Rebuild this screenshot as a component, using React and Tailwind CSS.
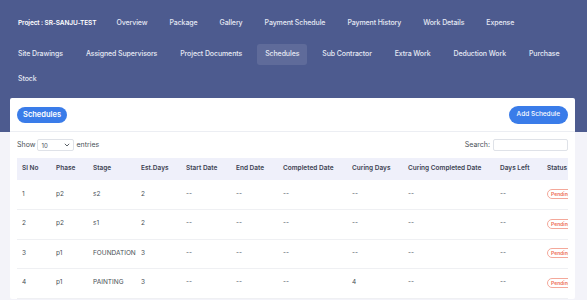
import React from 'react'

const navRows = [
  ['Overview', 'Package', 'Gallery', 'Payment Schedule', 'Payment History', 'Work Details', 'Expense'],
  ['Site Drawings', 'Assigned Supervisors', 'Project Documents', 'Schedules', 'Sub Contractor', 'Extra Work', 'Deduction Work', 'Purchase'],
  ['Stock'],
]

const cols = [
  ['Sl No', 'w-[34px]'],
  ['Phase', 'w-[37px]'],
  ['Stage', 'w-[48px]'],
  ['Est.Days', 'w-[45px]'],
  ['Start Date', 'w-[50px]'],
  ['End Date', 'w-[47px]'],
  ['Completed Date', 'w-[69px]'],
  ['Curing Days', 'w-[56px]'],
  ['Curing Completed Date', 'w-[92px]'],
  ['Days Left', 'w-[47px]'],
  ['Status', 'w-[50px]'],
]

const rows = [
  { id: 1, phase: 'p2', stage: 's2', est: 2, curing: '--' },
  { id: 2, phase: 'p2', stage: 's1', est: 2, curing: '--' },
  { id: 3, phase: 'p1', stage: 'FOUNDATION', est: 3, curing: '--' },
  { id: 4, phase: 'p1', stage: 'PAINTING', est: 3, curing: '4' },
]

function NavItem({ label }) {
  const active = label === 'Schedules'
  return (
    <span className={`px-[8px] py-[5px] rounded-[3px] whitespace-nowrap ${active ? 'bg-white/10' : ''}`}>{label}</span>
  )
}

export default function App() {
  return (
    <div className="min-h-screen bg-[#f3f3f9] text-[#495057]" style={{ fontFamily: 'Inter, "Noto Sans", sans-serif' }}>
      <div className="bg-[#4d5b8f] h-[132px] -mb-[34px] pt-[15px] px-[10px] text-[#e6e9f4] text-[7px] font-medium tracking-[-0.1px]">
        <div className="flex items-center gap-[6px] h-[17px]">
          <span className="px-[8px] mr-[-2px] text-[6.5px] font-semibold text-white whitespace-nowrap">Project : SR-SANJU-TEST</span>
          {navRows[0].map((l) => <NavItem key={l} label={l} />)}
        </div>
        <div className="flex items-center gap-[7px] h-[17px] mt-[14px]">
          {navRows[1].map((l) => <NavItem key={l} label={l} />)}
        </div>
        <div className="flex items-center h-[17px] mt-[8px]">
          {navRows[2].map((l) => <NavItem key={l} label={l} />)}
        </div>
      </div>

      <div className="mx-[10px] mr-[12px] bg-white rounded-[2px] relative">
        <div className="flex items-center justify-between px-[7px] pt-[8px] pb-[7px] border-b border-[#eceef3]">
          <span className="bg-[#3a7ce9] text-white text-[7.5px] font-semibold rounded-full px-[6px] py-[2px]">Schedules</span>
          <button className="bg-[#3a7ce9] text-white text-[6.5px] font-medium rounded-full px-[8px] h-[18px]">Add Schedule</button>
        </div>

        <div className="px-[7px] pt-[7px]">
          <div className="flex items-center justify-between text-[7px] text-[#495057]">
            <div className="flex items-center gap-[2px]">
              <span>Show</span>
              <div className="w-[37px] h-[12px] border border-[#dfe2e8] rounded-[2px] flex items-center justify-between px-[3px] text-[6px]">
                <span>10</span>
                <svg width="6" height="4" viewBox="0 0 6 4"><path d="M0.8 0.8 L3 3 L5.2 0.8" fill="none" stroke="#495057" strokeWidth="0.9" /></svg>
              </div>
              <span>entries</span>
            </div>
            <div className="flex items-center gap-[3px]">
              <span>Search:</span>
              <div className="w-[75px] h-[12px] border border-[#dfe2e8] rounded-[2px]" />
            </div>
          </div>

          <div className="mt-[7px] overflow-hidden">
            <table className="table-fixed border-collapse text-[6.5px] w-[575px]">
              <colgroup>
                {cols.map(([h, w]) => <col key={h} className={w} />)}
              </colgroup>
              <thead>
                <tr className="bg-[#eff0fa] h-[22px]">
                  {cols.map(([h]) => (
                    <th key={h} className="text-left font-semibold text-[#3c4252] pl-[5px] whitespace-nowrap">{h}</th>
                  ))}
                </tr>
              </thead>
              <tbody className="text-[#495057]">
                {rows.map((r) => (
                  <tr key={r.id} className="h-[29.5px] border-b border-[#eff0f3]">
                    <td className="pl-[5px]">{r.id}</td>
                    <td className="pl-[5px]">{r.phase}</td>
                    <td className="pl-[5px] whitespace-nowrap">{r.stage}</td>
                    <td className="pl-[5px]">{r.est}</td>
                    <td className="pl-[5px]">--</td>
                    <td className="pl-[5px]">--</td>
                    <td className="pl-[5px]">--</td>
                    <td className="pl-[5px]">{r.curing}</td>
                    <td className="pl-[5px]">--</td>
                    <td className="pl-[5px]">--</td>
                    <td className="pl-[5px]">
                      <span className="inline-block border border-[#f4a89a] text-[#ee6d58] rounded-full px-[3px] text-[5px] font-semibold leading-[8px]">Pending</span>
                    </td>
                  </tr>
                ))}
              </tbody>
            </table>
          </div>
        </div>
      </div>
    </div>
  )
}
